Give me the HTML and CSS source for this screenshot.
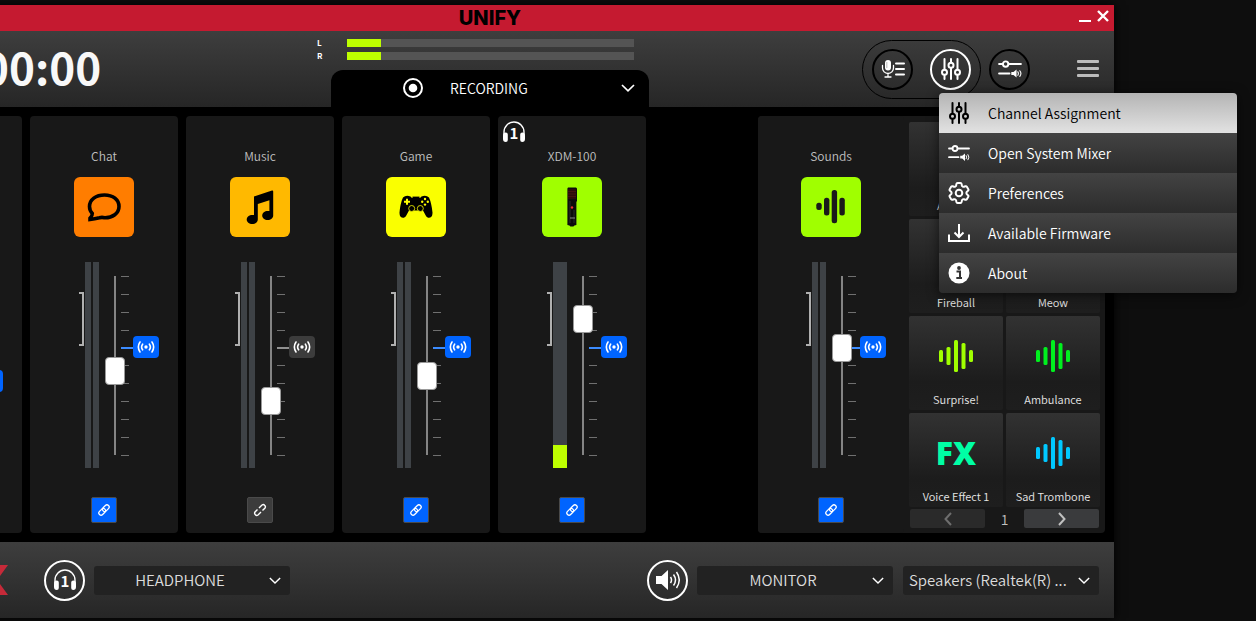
FILE: index.html
```html
<!DOCTYPE html>
<html lang="en">
<head>
  <meta charset="UTF-8">
  <meta name="viewport" content="width=device-width, initial-scale=1.0">
  <title>UNIFY</title>
  <link rel="stylesheet" href="styles.css">
</head>
<body>

  <!-- Shared icons -->
  <svg class="sprite" aria-hidden="true">
    <symbol id="i-faders" viewBox="0 0 20 22">
      <g fill="none" stroke="currentColor" stroke-width="2" stroke-linecap="round">
        <path d="M3.5 1v10.5M3.5 17v4M10 1v3.5M10 10v11M16.5 1v10.5M16.5 17v4"/>
        <circle cx="3.5" cy="14.3" r="2.5"/><circle cx="10" cy="7.2" r="2.5"/><circle cx="16.5" cy="14.3" r="2.5"/>
      </g>
    </symbol>
    <symbol id="i-mixer" viewBox="0 0 22 16">
      <g fill="none" stroke="currentColor" stroke-width="1.8" stroke-linecap="round">
        <path d="M1 3.5h3.5M9.7 3.5H21M1 12.2h9.5"/>
        <circle cx="7" cy="3.5" r="2.5"/>
        <path d="M18.2 10.6q1 1.6 0 3.2M20 9.6q2 2.6 0 5.2" stroke-width="1"/>
      </g>
      <path d="M12.2 10.8h2l2.8-2.3v7.4l-2.8-2.3h-2z" fill="currentColor"/>
    </symbol>
    <symbol id="i-chevron" viewBox="0 0 14 8">
      <path d="M1 1l6 5.800L13 1" fill="none" stroke="currentColor" stroke-width="1.700"/>
    </symbol>
    <symbol id="i-cast" viewBox="0 0 18 14">
      <g fill="none" stroke="currentColor" stroke-width="1.6" stroke-linecap="round">
        <path d="M5.600 4.200q-2 2.800 0 5.600M12.400 4.200q2 2.800 0 5.600M3 2Q-.3 7 3 12M15 2q3.300 5 0 10"/>
      </g>
      <circle cx="9" cy="7" r="1.700" fill="currentColor"/>
    </symbol>
    <symbol id="i-link" viewBox="0 0 14 14">
      <g fill="none" stroke="currentColor" stroke-width="1.300">
        <rect x="-3.800" y="-2.200" width="7.600" height="4.400" rx="2.200" transform="translate(5.200 8.800) rotate(-45)"/>
        <rect x="-3.800" y="-2.200" width="7.600" height="4.400" rx="2.200" transform="translate(8.800 5.200) rotate(-45)"/>
      </g>
    </symbol>
    <symbol id="i-unlink" viewBox="0 0 14 14">
      <g fill="none" stroke="currentColor" stroke-width="1.400">
        <path d="M6 5l3-3q1.500-1 2.600.2Q13 3.500 12 5L9.500 7.500M8 9l-3 3q-1.500 1-2.600-.2Q1 10.500 2 9l2.500-2.500"/>
      </g>
    </symbol>
    <symbol id="i-headphones" viewBox="0 0 24 22">
      <path d="M2 14v-3a10 10 0 0 1 20 0v3" fill="none" stroke="currentColor" stroke-width="1.400"/>
      <path d="M1 14.500q0-3 2.800-3 2 0 2 2v5.500q0 2-2 2-2.800 0-2.800-3zM23 14.500q0-3-2.800-3-2 0-2 2v5.500q0 2 2 2 2.800 0 2.800-3z" fill="currentColor"/>
      <text x="12" y="18" text-anchor="middle" class="headphone-number">1</text>
    </symbol>
    <symbol id="i-wave" viewBox="0 0 34 32">
      <g fill="currentColor">
        <rect x="0" y="10" width="4" height="12" rx="1.500"/><rect x="7.500" y="7" width="4" height="18" rx="1.500"/>
        <rect x="15" y="0" width="4" height="32" rx="1.500"/><rect x="22.500" y="3" width="4" height="26" rx="1.500"/>
        <rect x="30" y="10" width="4" height="12" rx="1.500"/>
      </g>
    </symbol>
  </svg>

  <div class="app">
    <!-- Title bar -->
    <div class="title-bar">
      <span class="brand">UNIFY</span>
      <div class="window-buttons">
        <button aria-label="Minimize"><svg width="12" height="14" viewBox="0 0 12 14"><path d="M0 12h12" stroke="#fff" stroke-width="2"/></svg></button>
        <button aria-label="Close"><svg width="12" height="14" viewBox="0 0 12 14"><path d="M1 2l10 10M11 2L1 12" stroke="#fff" stroke-width="2.400"/></svg></button>
      </div>
    </div>

    <!-- Header -->
    <header class="header">
      <div class="timer">00:00</div>
      <div class="master">
        <div class="level"><span>L</span><div class="level-bar"><div class="level-fill" style="width: 12%"></div></div></div>
        <div class="level"><span>R</span><div class="level-bar"><div class="level-fill" style="width: 12%"></div></div></div>
        <div class="record-tab">
          <svg width="20" height="20" viewBox="0 0 20 20"><circle cx="10" cy="10" r="9" fill="none" stroke="#fff" stroke-width="2"/><circle cx="10" cy="10" r="4.300" fill="#fff"/></svg>
          <select aria-label="Output mode"><option>RECORDING</option></select>
          <svg class="chevron" width="14" height="8"><use href="#i-chevron"/></svg>
        </div>
      </div>
      <div class="actions">
        <div class="pill">
          <button class="round" aria-label="Effects">
            <svg width="24" height="18" viewBox="0 0 24 18">
              <rect x="4" y="0" width="6" height="10.500" rx="3" fill="#fff"/>
              <path d="M5 3h1.500M5 5h1.500M5 7h1.500" stroke="#777" stroke-width=".7"/>
              <path d="M1.500 5.500v2.500a5.500 5.500 0 0 0 11 0V5.500M7 13.500v3M4 17h6" fill="none" stroke="#fff" stroke-width="1.300" stroke-linecap="round"/>
              <path d="M15 3.500h8M15 9h8M15 14.500h8" stroke="#fff" stroke-width="2" stroke-linecap="round"/>
            </svg>
          </button>
          <button class="round active" aria-label="Mixer"><svg width="20" height="22"><use href="#i-faders"/></svg></button>
        </div>
        <button class="round" aria-label="System mixer"><svg width="24" height="18"><use href="#i-mixer"/></svg></button>
        <button class="menu-button" aria-label="Menu"><span></span><span></span><span></span></button>
      </div>
    </header>

    <!-- Mixer channels -->
    <main class="mixer">
      <section class="strip strip-cut">
        <button class="cast on" aria-label="Broadcast level"><svg width="18" height="14"><use href="#i-cast"/></svg></button>
      </section>

      <section class="strip">
        <h2>Chat</h2>
        <div class="tile orange">
          <svg width="34" height="30" viewBox="0 0 34 30"><path d="M3 26.300Q5.500 23.500 5.300 21.500C3 19 2.500 16.500 2.500 14.500 2.500 7.500 9 3 17.500 3S32 7.700 32 14.500 25.500 26 17.500 25.800q-2.500-.8-5 0Q7.500 27 3 27.500z" fill="none" stroke="#000" stroke-width="3.600"/></svg>
        </div>
        <div class="fader">
          <div class="bracket"></div>
          <div class="meter"><i></i><i></i></div>
          <input type="range" value="47" aria-label="Chat volume">
          <div class="ticks"><i></i><i></i><i></i><i></i><i></i><i></i><i></i><i></i><i></i><i></i><i></i></div>
          <button class="cast on" aria-label="Broadcast level"><svg width="18" height="14"><use href="#i-cast"/></svg></button>
        </div>
        <button class="link on" aria-label="Link faders"><svg width="14" height="14"><use href="#i-link"/></svg></button>
      </section>

      <section class="strip">
        <h2>Music</h2>
        <div class="tile amber">
          <svg width="28" height="34" viewBox="0 0 28 34"><path d="M8 6.500L26 .5q1.200-.3 1.200 1v24c0 2.500-2.400 4.500-5.500 4.500s-5.500-1.800-5.500-4.500 2.500-4.600 5.500-4.600l1.700.2V10.300l-11.600 3.800v15.400c0 2.600-2.400 4.500-5.500 4.500S.7 32.200.7 29.500s2.500-4.600 5.500-4.600l1.800.2z" fill="#000"/></svg>
        </div>
        <div class="fader">
          <div class="bracket"></div>
          <div class="meter"><i></i><i></i></div>
          <input type="range" value="30" aria-label="Music volume">
          <div class="ticks"><i></i><i></i><i></i><i></i><i></i><i></i><i></i><i></i><i></i><i></i><i></i></div>
          <button class="cast" aria-label="Broadcast level"><svg width="18" height="14"><use href="#i-cast"/></svg></button>
        </div>
        <button class="link" aria-label="Link faders"><svg width="14" height="14"><use href="#i-unlink"/></svg></button>
      </section>

      <section class="strip">
        <h2>Game</h2>
        <div class="tile yellow">
          <svg width="34" height="24" viewBox="0 0 34 24">
            <path d="M4 2.500Q7-.3 11.500 1.500L13 3h8l1.500-1.500Q27-.3 30 2.500 32.500 8 33.500 17.500c.3 6-4.800 6.500-6.500 3.500l-3-5.500q-2.500 1.500-4.500 0h-5q-2 1.500-4.500 0l-3 5.500C5.300 24 .2 23.500.5 17.500 1.500 8 3 5 4 2.500z" fill="#000"/>
            <path d="M13.500 2.300h7" stroke="#000" stroke-width="1.400"/>
            <path d="M8 3.800v6M5 6.800h6" stroke="#ff0" stroke-width="2"/>
            <g fill="#ff0"><circle cx="26" cy="4" r="1.200"/><circle cx="26" cy="9.600" r="1.200"/><circle cx="23.200" cy="6.800" r="1.200"/><circle cx="28.800" cy="6.800" r="1.200"/></g>
            <g fill="#000" stroke="#ff0" stroke-width=".8"><circle cx="12.700" cy="13.500" r="3"/><circle cx="21.300" cy="13.500" r="3"/></g>
          </svg>
        </div>
        <div class="fader">
          <div class="bracket"></div>
          <div class="meter"><i></i><i></i></div>
          <input type="range" value="44" aria-label="Game volume">
          <div class="ticks"><i></i><i></i><i></i><i></i><i></i><i></i><i></i><i></i><i></i><i></i><i></i></div>
          <button class="cast on" aria-label="Broadcast level"><svg width="18" height="14"><use href="#i-cast"/></svg></button>
        </div>
        <button class="link on" aria-label="Link faders"><svg width="14" height="14"><use href="#i-link"/></svg></button>
      </section>

      <section class="strip">
        <svg class="assigned" width="24" height="22"><use href="#i-headphones"/></svg>
        <h2>XDM-100</h2>
        <div class="tile lime">
          <svg width="12" height="40" viewBox="0 0 12 40">
            <path d="M2 .5h8l1 1V14l-.6 1v23l-2 .5-1 1h-3l-1-1-2-.5V1.500z" fill="#0c0c0c"/>
            <path d="M2 2h8v10H2z" fill="#2a0a0a"/>
            <path d="M2 4.500h8M2 7h8M2 9.500h8" stroke="#4d1212" stroke-width=".8"/>
            <path d="M4 14v22M8 23v13" stroke="#333" stroke-width=".8"/>
            <path d="M4 31h5" stroke="#888"/><circle cx="6" cy="20.500" r="1.200" fill="#f03030"/>
          </svg>
        </div>
        <div class="fader">
          <div class="bracket"></div>
          <div class="meter mono"><i><b style="height: 11%"></b></i></div>
          <input type="range" value="76" aria-label="XDM-100 volume">
          <div class="ticks"><i></i><i></i><i></i><i></i><i></i><i></i><i></i><i></i><i></i><i></i><i></i></div>
          <button class="cast on" aria-label="Broadcast level"><svg width="18" height="14"><use href="#i-cast"/></svg></button>
        </div>
        <button class="link on" aria-label="Link faders"><svg width="14" height="14"><use href="#i-link"/></svg></button>
      </section>

      <!-- Sounds channel with its pads -->
      <section class="sounds">
        <div class="strip">
          <h2>Sounds</h2>
          <div class="tile lime">
            <svg width="60" height="60" viewBox="0 0 60 60" fill="#1a1a1a"><rect x="15.300" y="25.700" width="5.400" height="7.400" rx="2.500"/><rect x="23" y="20.700" width="5.400" height="17.700" rx="2.500"/><rect x="30.700" y="13" width="5.400" height="33.300" rx="2.500"/><rect x="38.400" y="20.700" width="5.400" height="17.700" rx="2.500"/></svg>
          </div>
          <div class="fader">
            <div class="bracket"></div>
            <div class="meter"><i></i><i></i></div>
            <input type="range" value="60" aria-label="Sounds volume">
            <div class="ticks"><i></i><i></i><i></i><i></i><i></i><i></i><i></i><i></i><i></i><i></i><i></i></div>
            <button class="cast on" aria-label="Broadcast level"><svg width="18" height="14"><use href="#i-cast"/></svg></button>
          </div>
          <button class="link on" aria-label="Link faders"><svg width="14" height="14"><use href="#i-link"/></svg></button>
        </div>
        <div class="pads">
          <div class="pad-grid">
            <button class="pad">Airhorn</button>
            <button class="pad" aria-label="Pad 2"></button>
            <button class="pad">Fireball</button>
            <button class="pad">Meow</button>
            <button class="pad"><svg class="c-lime" width="34" height="32"><use href="#i-wave"/></svg>Surprise!</button>
            <button class="pad"><svg class="c-green" width="34" height="32"><use href="#i-wave"/></svg>Ambulance</button>
            <button class="pad"><span class="fx">FX</span>Voice Effect 1</button>
            <button class="pad"><svg class="c-blue" width="34" height="32"><use href="#i-wave"/></svg>Sad Trombone</button>
          </div>
          <div class="pager">
            <button disabled aria-label="Previous page"><svg width="8" height="14" viewBox="0 0 8 14"><path d="M7 1L1.500 7 7 13" fill="none" stroke="currentColor" stroke-width="2"/></svg></button>
            <span>1</span>
            <button aria-label="Next page"><svg width="8" height="14" viewBox="0 0 8 14"><path d="M1 1l5.500 6L1 13" fill="none" stroke="currentColor" stroke-width="2"/></svg></button>
          </div>
        </div>
      </section>
    </main>

    <!-- Footer -->
    <footer class="footer">
      <svg class="logo" width="34" height="30" viewBox="0 0 34 30"><path d="M0 0h10l7 9 7-9h10L23 15l11 15H24l-7-9-7 9H0l11-15z" fill="#c62a39"/></svg>
      <span class="round active"><svg width="24" height="22"><use href="#i-headphones"/></svg></span>
      <div class="picker">
        <select aria-label="Headphone mix"><option>HEADPHONE</option></select>
        <svg class="chevron" width="12" height="7"><use href="#i-chevron"/></svg>
      </div>
      <span class="round active monitor"><svg width="24" height="20" viewBox="0 0 24 20"><path d="M0 6h5.500L12 0v20l-6.500-6H0z" fill="#fff"/><path d="M14.500 7q2 3 0 6M17.500 4.500q4 5.500 0 11M20.500 2q5.500 8 0 16" fill="none" stroke="#fff" stroke-width="1.500"/></svg></span>
      <div class="picker">
        <select aria-label="Monitor mix"><option>MONITOR</option></select>
        <svg class="chevron" width="12" height="7"><use href="#i-chevron"/></svg>
      </div>
      <div class="picker device">
        <select aria-label="Monitor device"><option>Speakers (Realtek(R) ...</option></select>
        <svg class="chevron" width="12" height="7"><use href="#i-chevron"/></svg>
      </div>
    </footer>
  </div>

  <!-- Open menu -->
  <nav class="menu">
    <button class="selected"><svg width="22" height="22"><use href="#i-faders"/></svg>Channel Assignment</button>
    <button><svg width="22" height="16"><use href="#i-mixer"/></svg>Open System Mixer</button>
    <button>
      <svg width="22" height="22" viewBox="2 2 20 20" fill="none" stroke="currentColor" stroke-width="1.800"><path d="M9.594 3.940c.09-.542.56-.94 1.110-.94h2.593c.55 0 1.020.398 1.110.94l.213 1.281c.063.374.313.686.645.87.074.04.147.083.22.127.325.196.72.257 1.075.124l1.217-.456a1.125 1.125 0 0 1 1.370.49l1.296 2.247a1.125 1.125 0 0 1-.26 1.431l-1.003.827c-.293.241-.438.613-.43.992a7.723 7.723 0 0 1 0 .255c-.008.378.137.75.43.991l1.004.827c.424.35.534.955.26 1.430l-1.298 2.247a1.125 1.125 0 0 1-1.369.491l-1.217-.456c-.355-.133-.75-.072-1.076.124a6.470 6.470 0 0 1-.22.128c-.331.183-.581.495-.644.869l-.213 1.281c-.09.543-.56.94-1.110.94h-2.594c-.55 0-1.019-.398-1.110-.94l-.213-1.281c-.062-.374-.312-.686-.644-.87a6.520 6.520 0 0 1-.22-.127c-.325-.196-.72-.257-1.076-.124l-1.217.456a1.125 1.125 0 0 1-1.369-.49l-1.297-2.247a1.125 1.125 0 0 1 .26-1.431l1.004-.827c.292-.24.437-.613.43-.991a6.932 6.932 0 0 1 0-.255c.007-.38-.138-.751-.43-.992l-1.004-.827a1.125 1.125 0 0 1-.26-1.430l1.297-2.247a1.125 1.125 0 0 1 1.370-.491l1.216.456c.356.133.751.072 1.076-.124.072-.044.146-.086.22-.128.332-.183.582-.495.644-.869l.214-1.280Z"/><circle cx="12" cy="12" r="3"/></svg>Preferences
    </button>
    <button><svg width="22" height="18" viewBox="0 0 22 18" fill="none" stroke="currentColor" stroke-width="2"><path d="M1 10.500V17h20v-6.500M11 0v13M6.500 8.500L11 13l4.500-4.500"/></svg>Available Firmware</button>
    <button><svg width="22" height="22" viewBox="0 0 22 22"><circle cx="11" cy="11" r="10.500" fill="#fff"/><circle cx="11" cy="6" r="1.900" fill="#333"/><path d="M8.500 9.500H12v6M8.300 16h5.700" fill="none" stroke="#333" stroke-width="2"/></svg>About</button>
  </nav>

</body>
</html>
```

FILE: styles.css
```css
* {
  box-sizing: border-box;
}

body {
  position: relative;
  margin: 0;
  padding-top: 5px;
  min-height: 100vh;
  background-color: #0e0e0e;
  color: #fff;
  font-family: "Noto Sans CJK SC", "Noto Sans", sans-serif;
  font-size: 14px;
  font-weight: 350;
  line-height: 20px;
  overflow: hidden;
}

button, select {
  margin: 0;
  padding: 0;
  border: 0;
  background: none;
  color: inherit;
  font: inherit;
  cursor: pointer;
}

select {
  appearance: none;
  outline: none;
}

svg {
  display: block;
  flex: none;
}

.sprite {
  position: absolute;
  width: 0;
  height: 0;
}

/* The window hangs over the left screen edge */
.app {
  margin: 0 142px 0 -134px;
  background-color: #000;
  box-shadow: 0 0 10px #000;
}

/* Title bar */
.title-bar {
  display: grid;
  grid-template-columns: 1fr auto 1fr;
  align-items: center;
  height: 26px;
  padding: 0 5px;
  background-color: #c51a30;
}

.brand {
  grid-column: 2;
  color: #000;
  font-family: Inter, sans-serif;
  font-size: 20px;
  font-weight: 800;
}

.window-buttons {
  display: flex;
  justify-content: flex-end;
  gap: 6px;
  padding-bottom: 4px;
}

/* Header */
.header {
  display: grid;
  grid-template-columns: 1fr 318px 1fr;
  height: 76px;
  background: linear-gradient(#3e3e3e, #262626);
}

.timer {
  padding-left: 117px;
  color: #f8f8f8;
  font-size: 44px;
  font-weight: 700;
  line-height: 70px;
}

.master {
  display: flex;
  flex-direction: column;
  gap: 5px;
  padding-top: 8px;
}

.level {
  display: flex;
  align-items: center;
  gap: 24px;
  height: 8px;
  margin: 0 15px 0 -14px;
  font-size: 8px;
  font-weight: 700;
  line-height: 8px;
}

.level span {
  width: 6px;
}

.level-bar {
  flex: 1;
  height: 8px;
  background-color: #545454;
}

.level-fill {
  height: 100%;
  background-color: #beff00;
}

.record-tab {
  position: relative;
  display: flex;
  flex: 1;
  align-items: center;
  gap: 27px;
  margin-top: 5px;
  padding: 0 0 1px 72px;
  border-radius: 12px 12px 0 0;
  background-color: #000;
}

.record-tab select {
  flex: 1;
}

.chevron {
  position: absolute;
  right: 14px;
  pointer-events: none;
}

.actions {
  display: flex;
  align-items: center;
  justify-content: flex-end;
  padding-right: 15px;
}

.pill {
  display: flex;
  gap: 17px;
  margin-right: 8px;
  padding: 8px 9px;
  border: 1px solid #000;
  border-radius: 30px;
}

.round {
  display: flex;
  align-items: center;
  justify-content: center;
  flex: none;
  width: 41px;
  height: 41px;
  border: 2px solid #000;
  border-radius: 50%;
}

.round.active {
  border-color: #fff;
}

.menu-button {
  display: flex;
  flex-direction: column;
  gap: 4px;
  width: 22px;
  margin-left: 47px;
  padding-bottom: 2px;
}

.menu-button span {
  height: 3px;
  border-radius: 1px;
  background-color: #bcbcbc;
}

/* Mixer */
.mixer {
  display: flex;
  gap: 8px;
  padding: 9px 9px 9px 8px;
}

.strip {
  position: relative;
  display: flex;
  flex: none;
  flex-direction: column;
  align-items: center;
  width: 148px;
  padding: 30px 0 10px;
  border-radius: 4px;
  background-color: #181818;
}

.strip h2 {
  margin: 0 0 11px;
  color: #c0c0c0;
  font-size: 12px;
  font-weight: 350;
  line-height: 20px;
}

.strip-cut {
  align-items: flex-end;
  padding: 254px 19px 0 0;
}

.assigned {
  position: absolute;
  top: 5px;
  left: 4px;
}

.headphone-number {
  fill: currentColor;
  font-family: "Noto Sans CJK SC", sans-serif;
  font-size: 15px;
  font-weight: 700;
}

.tile {
  display: flex;
  align-items: center;
  justify-content: center;
  width: 60px;
  height: 60px;
  margin-bottom: 25px;
  border-radius: 6px;
}

.orange { background-color: #ff7d00; }
.amber { background-color: #ffb900; }
.yellow { background-color: #faff00; }
.lime { background-color: #a0ff00; }

.fader {
  display: flex;
  align-self: stretch;
  height: 207px;
  margin-bottom: 28px;
  padding-left: 49px;
}

.bracket {
  width: 5px;
  height: 54px;
  margin: 30px 1px 0 0;
  border: 2px solid #b0b0b0;
  border-left: 0;
}

.meter {
  display: flex;
  gap: 2px;
  width: 14px;
  height: 206px;
  margin-right: 6px;
}

.meter i {
  display: flex;
  flex: 1;
  align-items: flex-end;
  background-color: #3e4246;
}

.meter b {
  flex: 1;
  background-color: #beff00;
}

.fader input {
  z-index: 1;
  width: 20px;
  height: 207px;
  margin: 0;
  appearance: none;
  background: linear-gradient(#848484, #848484) center / 2px 179px no-repeat;
  writing-mode: vertical-lr;
  direction: rtl;
}

.fader input::-webkit-slider-thumb {
  appearance: none;
  width: 20px;
  height: 28px;
  border: 1px solid #999;
  border-radius: 4px;
  background-color: #fff;
}

.ticks {
  display: flex;
  flex-direction: column;
  justify-content: space-between;
  width: 8px;
  height: 180px;
  margin: 14px 4px 0 -4px;
}

.ticks i {
  height: 1px;
  background-color: #707070;
}

.cast {
  position: relative;
  display: flex;
  align-items: center;
  justify-content: center;
  flex: none;
  width: 26px;
  height: 22px;
  border-radius: 4px;
  background-color: #3c3c3c;
}

.fader .cast {
  margin-top: 74px;
}

.cast::before {
  content: "";
  position: absolute;
  top: 11px;
  right: 100%;
  width: 12px;
  height: 2px;
  background-color: #909090;
}

.cast.on {
  background-color: #0064ff;
}

.cast.on::before {
  background-color: #3c8cff;
}

.link {
  display: flex;
  align-items: center;
  justify-content: center;
  width: 26px;
  height: 26px;
  border: 1px solid #4a4a4a;
  border-radius: 2px;
  background-color: #3c3c3c;
}

.link.on {
  background-color: #0064ff;
}

/* Sound pads */
.sounds {
  display: flex;
  margin-left: auto;
  padding-right: 5px;
  border-radius: 4px;
  background-color: #181818;
}

.sounds .strip {
  width: 146px;
}

.sounds .fader {
  padding-left: 48px;
}

.pads {
  margin: 6px 0 0 5px;
}

.pad-grid {
  display: grid;
  grid-template-columns: 94px 94px;
  grid-auto-rows: 94px;
  gap: 3px;
}

.pad {
  display: flex;
  flex-direction: column;
  align-items: center;
  justify-content: flex-end;
  gap: 19px;
  padding-bottom: 3px;
  border-radius: 2px;
  background: linear-gradient(#323232, #1c1c1c 70%, #1e1e1e);
  color: #e6e6e6;
  font-size: 11px;
  line-height: 16px;
}

.c-lime { color: #a0ff00; }
.c-green { color: #00f01e; }
.c-blue { color: #00c8ff; }

.fx {
  color: #00ffa5;
  font-family: "Open Sans", sans-serif;
  font-size: 32px;
  font-weight: 800;
  line-height: 32px;
}

.pager {
  display: flex;
  align-items: center;
  justify-content: space-between;
  height: 19px;
  margin: 2px 1px 0;
  color: #c0c0c0;
}

.pager button {
  display: flex;
  align-items: center;
  justify-content: center;
  width: 75px;
  height: 19px;
  border-radius: 2px;
  background-color: #3a3b3d;
}

.pager button:disabled {
  background-color: #2a2a2a;
  color: #6e6e6e;
}

/* Footer */
.footer {
  display: flex;
  align-items: center;
  height: 76px;
  padding: 0 15px 0 108px;
  background: linear-gradient(#3e3e3e, #262626);
  font-size: 15px;
}

.logo {
  margin-right: 36px;
}

.picker {
  position: relative;
  display: flex;
  align-items: center;
  width: 196px;
  height: 29px;
  margin-left: 9px;
  border-radius: 3px;
  background-color: #222;
  color: #dcdcdc;
}

.picker select {
  width: 100%;
  height: 100%;
  padding-right: 24px;
  text-align: center;
  text-align-last: center;
}

.picker .chevron {
  right: 9px;
  color: #fff;
}

.monitor {
  margin-left: auto;
}

.picker.device {
  margin-left: 10px;
}

.device select {
  padding-left: 6px;
  text-align: left;
  text-align-last: left;
}

/* Drop-down menu */
.menu {
  position: absolute;
  top: 93px;
  right: 19px;
  z-index: 5;
  display: flex;
  flex-direction: column;
  width: 298px;
  border-radius: 4px;
  box-shadow: 0 2px 12px rgba(0, 0, 0, 0.6);
  overflow: hidden;
}

.menu button {
  display: flex;
  align-items: center;
  gap: 18px;
  height: 40px;
  padding-left: 9px;
  background: linear-gradient(#434343, #2c2c2c);
}

.menu .selected {
  background: linear-gradient(#b4b4b4, #e2e2e2);
  color: #000;
}
```
